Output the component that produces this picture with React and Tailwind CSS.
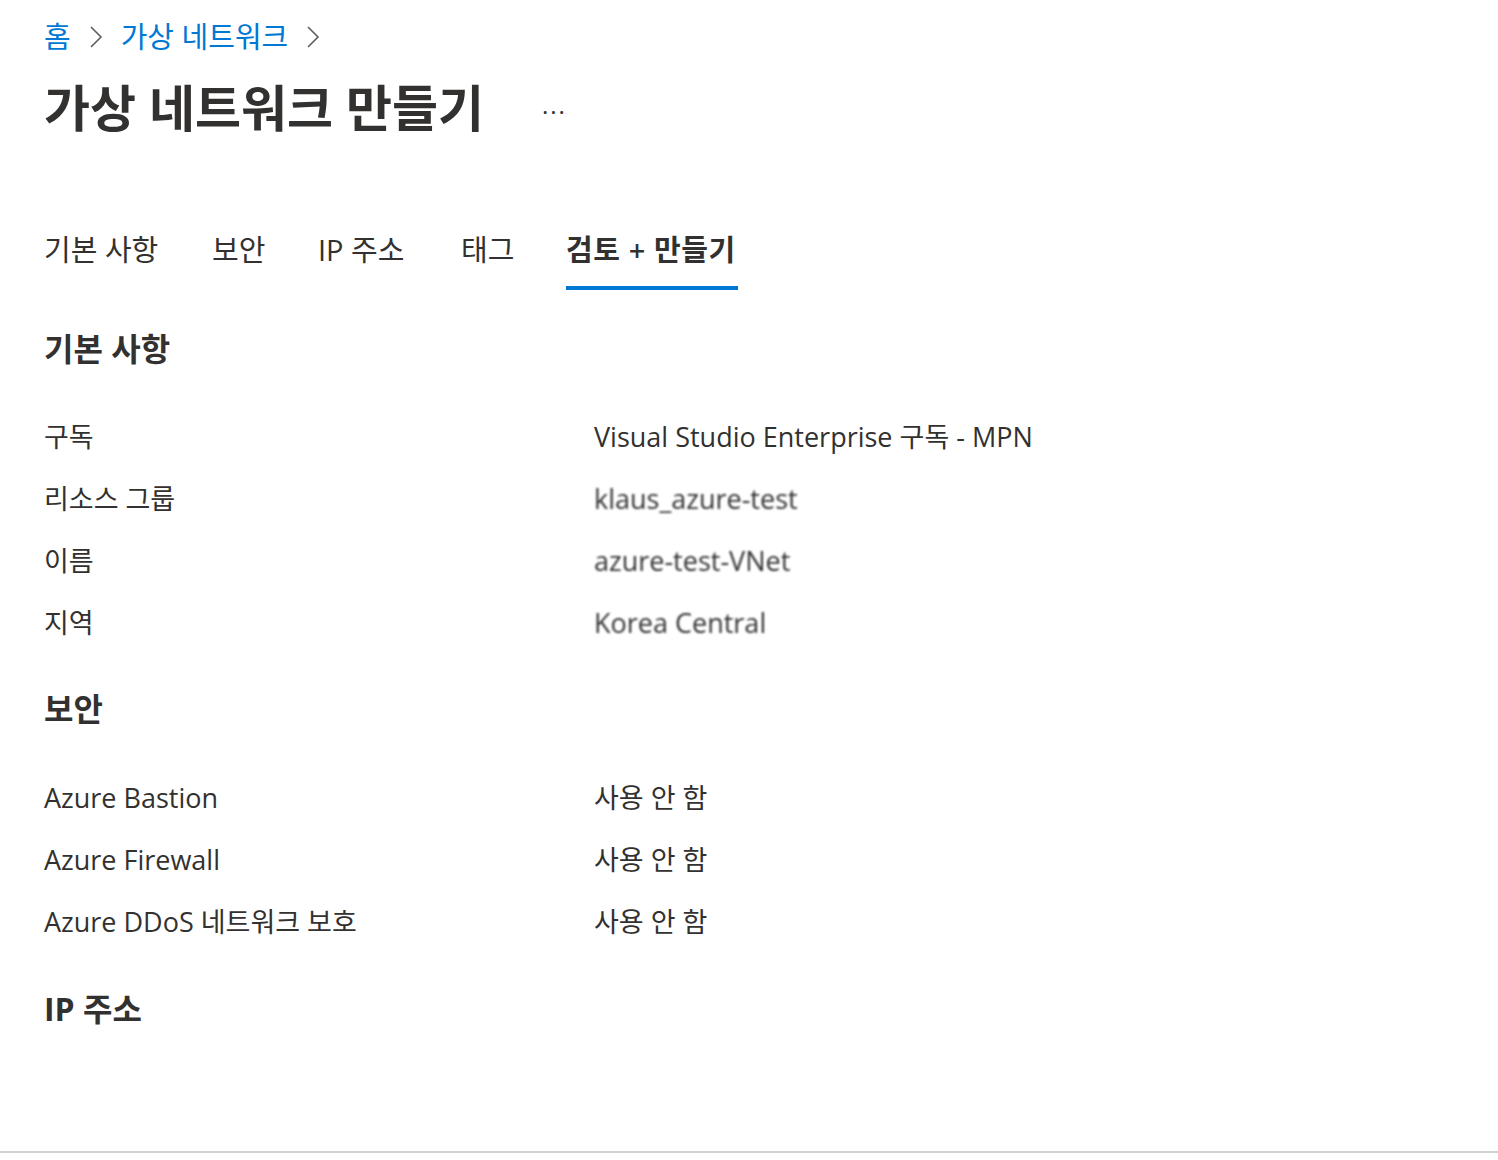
import React from "react";

const font = { fontFamily: '"Segoe UI", "Open Sans", "Noto Sans CJK KR", sans-serif' };

function Row({ label, value, blur }) {
  return (
    <div className="flex h-[62px] items-center">
      <div className="w-[550px] text-[27px] text-[#323130]">{label}</div>
      <div className={"text-[27px] text-[#323130] " + (blur ? "blur-[1.2px]" : "")}>{value}</div>
    </div>
  );
}

function Chevron() {
  return (
    <svg width="14" height="24" viewBox="0 0 14 24" className="mx-[18px]">
      <path d="M2 2 L12 12 L2 22" fill="none" stroke="#605e5c" strokeWidth="1.6" />
    </svg>
  );
}

export default function App() {
  const tabs = [
    { t: "기본 사항", w: "w-[168px]" },
    { t: "보안", w: "w-[106px]" },
    { t: "IP 주소", w: "w-[143px]" },
    { t: "태그", w: "w-[105px]" },
    { t: "검토 + 만들기", w: "w-[172px]" },
  ];
  return (
    <div className="flex h-[1160px] w-[1498px] flex-col bg-white" style={font}>
      <div className="flex-1 border-b-2 border-[#d2d2d2] pl-[44px]">
        <div className="mt-[17px] flex h-[40px] items-center text-[29px] text-[#0078d4]">
          <span>홈</span>
          <Chevron />
          <span>가상 네트워크</span>
          <Chevron />
        </div>
        <div className="mt-[19px] flex h-[64px] items-center">
          <h1 className="text-[50px] font-bold text-[#323130]">가상 네트워크 만들기</h1>
          <span className="mb-[6px] ml-[58px] text-[24px] tracking-[2px] text-[#323130]">...</span>
        </div>
        <div className="mt-[90px] flex">
          {tabs.map((tab, i) => (
            <div key={tab.t} className={"flex shrink-0 flex-col " + tab.w}>
              <div
                className={
                  "flex h-[40px] items-center whitespace-nowrap text-[29px] text-[#323130] " +
                  (i === 4 ? "font-semibold tracking-[0.6px]" : "")
                }
              >
                {tab.t}
              </div>
              <div className={"mt-[16px] h-[4px] " + (i === 4 ? "w-full bg-[#0078d4]" : "bg-transparent")} />
            </div>
          ))}
        </div>
        <h2 className="mt-[39px] flex h-[40px] items-center text-[32px] font-bold text-[#323130]">기본 사항</h2>
        <div className="mt-[37px]">
          <Row label="구독" value="Visual Studio Enterprise 구독 - MPN" />
          <Row label="리소스 그룹" value="klaus_azure-test" blur />
          <Row label="이름" value="azure-test-VNet" blur />
          <Row label="지역" value="Korea Central" blur />
        </div>
        <h2 className="mt-[35px] flex h-[40px] items-center text-[32px] font-bold text-[#323130]">보안</h2>
        <div className="mt-[38px]">
          <Row label="Azure Bastion" value="사용 안 함" />
          <Row label="Azure Firewall" value="사용 안 함" />
          <Row label="Azure DDoS 네트워크 보호" value="사용 안 함" />
        </div>
        <h2 className="mt-[36px] flex h-[40px] items-center text-[32px] font-bold text-[#323130]">IP 주소</h2>
      </div>
      <div className="h-[7px]" />
    </div>
  );
}
